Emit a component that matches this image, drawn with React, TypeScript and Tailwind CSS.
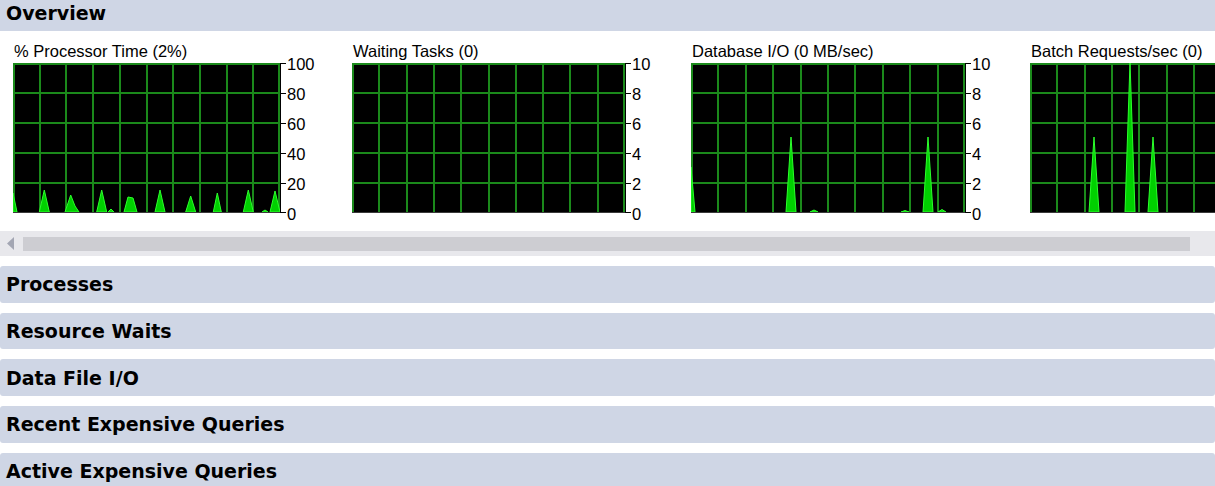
import React from "react";

type Spike = number[][]; // list of points [x, heightPx]

const H = 150;

function spike(x: number, h: number, hw: number): number[][] {
  return [
    [x - hw, 0],
    [x, h],
    [x + hw, 0],
  ];
}

const charts: {
  title: string;
  width: number;
  labels: string[];
  shapes: Spike[];
}[] = [
  {
    title: "% Processor Time (2%)",
    width: 267,
    labels: ["100", "80", "60", "40", "20", "0"],
    shapes: [
      [
        [0, 0],
        [0, 19],
        [4, 0],
      ],
      spike(31.3, 22, 5),
      [
        [52, 0],
        [57.7, 17],
        [62, 6],
        [66, 0],
      ],
      spike(88.7, 22, 5),
      spike(98, 3, 3),
      [
        [111, 0],
        [115, 15],
        [120, 14],
        [124, 0],
      ],
      spike(147, 22, 5),
      spike(177.7, 16, 5),
      spike(204.3, 19, 4),
      spike(235.3, 22, 5),
      spike(252, 2, 3),
      spike(262, 21, 5),
    ],
  },
  {
    title: "Waiting Tasks (0)",
    width: 273,
    labels: ["10", "8", "6", "4", "2", "0"],
    shapes: [],
  },
  {
    title: "Database I/O (0 MB/sec)",
    width: 274,
    labels: ["10", "8", "6", "4", "2", "0"],
    shapes: [
      [
        [0, 0],
        [0, 45],
        [4, 0],
      ],
      spike(100, 75, 5),
      spike(123, 2, 4),
      spike(214, 1.5, 4),
      spike(237, 75, 5),
      spike(251, 2.5, 4),
    ],
  },
  {
    title: "Batch Requests/sec (0)",
    width: 273,
    labels: [],
    shapes: [spike(64, 75, 5), spike(100, 150, 5), spike(123, 75, 5)],
  },
];

function Chart({
  title,
  width,
  labels,
  shapes,
}: {
  title: string;
  width: number;
  labels: string[];
  shapes: Spike[];
}) {
  const vx = Array.from({ length: 11 }, (_, i) => Math.round((i * width) / 10));
  const hy = Array.from({ length: 5 }, (_, j) => Math.round((j * H) / 5));
  return (
    <div className="w-[339px] shrink-0 pl-[13px] flex flex-col">
      <div className="pl-[1px] h-[19px] leading-[19px] text-[16.5px] text-black whitespace-nowrap font-['Liberation_Sans',Arial,sans-serif]">
        {title}
      </div>
      <div className="mt-[2px] flex h-[150px] items-start">
        <svg width={width + 6} height={H} className="shrink-0 block">
          <rect x={0} y={0} width={width} height={H} fill="#000" />
          {hy.map((y) => (
            <line
              key={"h" + y}
              x1={0}
              x2={width}
              y1={Math.max(y, 1)}
              y2={Math.max(y, 1)}
              stroke="#1b8a1b"
              strokeWidth={2}
            />
          ))}
          {vx.map((x, i) => (
            <line
              key={"v" + i}
              x1={Math.min(Math.max(x, 1), width - 1)}
              x2={Math.min(Math.max(x, 1), width - 1)}
              y1={0}
              y2={H}
              stroke="#1b8a1b"
              strokeWidth={2}
            />
          ))}
          {shapes.map((pts, i) => (
            <polygon
              key={"s" + i}
              points={pts.map(([x, h]) => `${x},${H - 1 - h}`).join(" ")}
              fill="#00d000"
              stroke="#2cff2c"
              strokeWidth={1}
              strokeLinejoin="round"
            />
          ))}
          <line x1={0} x2={width} y1={H - 0.5} y2={H - 0.5} stroke="#3a3a3a" strokeWidth={1} />
          <line x1={width + 0.5} x2={width + 0.5} y1={0} y2={H} stroke="#000" strokeWidth={1} />
          {[...hy, H - 1].map((y, i) => (
            <line
              key={"t" + i}
              x1={width}
              x2={width + 6}
              y1={y + 0.5}
              y2={y + 0.5}
              stroke="#000"
              strokeWidth={1}
            />
          ))}
        </svg>
        {labels.length > 0 && (
          <div className="ml-[1px] h-[169px] -mt-[8px] shrink-0 flex flex-col justify-between text-[16.5px] leading-[19px] text-black font-['Liberation_Sans',Arial,sans-serif]">
            {labels.map((l) => (
              <div key={l}>{l}</div>
            ))}
          </div>
        )}
      </div>
    </div>
  );
}

const sections = [
  "Processes",
  "Resource Waits",
  "Data File I/O",
  "Recent Expensive Queries",
  "Active Expensive Queries",
];

export default function App() {
  return (
    <div className="w-[1215px] h-[486px] overflow-hidden bg-white">
      <div className="h-[31px] bg-[#cfd6e5] pl-[6px] pt-[2px] text-[19px] leading-[22px] font-bold text-black font-['DejaVu_Sans',Verdana,sans-serif]">
        Overview
      </div>
      <div className="w-[1215px] overflow-hidden pt-[11px] pb-[12px]">
        <div className="flex">
          {charts.map((c) => (
            <Chart key={c.title} {...c} />
          ))}
        </div>
      </div>
      <div className="mt-[6px] h-[25px] bg-[#e8e8ec] flex items-center">
        <svg width={23} height={25} className="shrink-0 block">
          <polygon points="14,6 14,19 7,12.5" fill="#a3a6b3" />
        </svg>
        <div className="w-[1167px] h-[14px] bg-[#cdcdd2]" />
      </div>
      <div className="mt-[10px] flex flex-col gap-[10px]">
        {sections.map((s) => (
          <div
            key={s}
            className="h-[36.7px] shrink-0 rounded-[3px] bg-[#cfd6e5] pl-[6px] flex items-center text-[19px] leading-[22px] font-bold text-black font-['DejaVu_Sans',Verdana,sans-serif]"
          >
            {s}
          </div>
        ))}
      </div>
    </div>
  );
}
